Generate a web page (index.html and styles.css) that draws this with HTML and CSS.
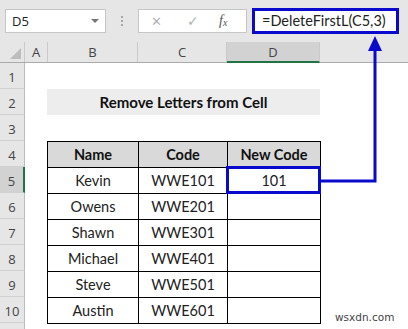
FILE: index.html
```html
<!DOCTYPE html>
<html>
<head>
<meta charset="utf-8">
<link rel="stylesheet" href="styles.css">
</head>
<body>
<div class="page">
  <div class="toolbar">
    <div class="namebox"><span class="nb-text">D5</span><span class="nb-arrow"></span></div>
    <div class="dots"><i></i><i></i><i></i></div>
    <div class="fbtns">
      <span class="btn-x">✕</span>
      <span class="btn-ok">✓</span>
      <span class="btn-fx">f<sub>x</sub></span>
    </div>
    <div class="formula">=DeleteFirstL(C5,3)</div>
  </div>
  <div class="colheads">
    <div class="ch corner"><span class="tri"></span></div>
    <div class="ch cA">A</div>
    <div class="ch cB">B</div>
    <div class="ch cC">C</div>
    <div class="ch cD sel">D</div>
    <div class="ch rest"></div>
  </div>
  <div class="body">
    <div class="rowheads">
      <div class="rh">1</div>
      <div class="rh">2</div>
      <div class="rh">3</div>
      <div class="rh">4</div>
      <div class="rh sel">5</div>
      <div class="rh">6</div>
      <div class="rh">7</div>
      <div class="rh">8</div>
      <div class="rh">9</div>
      <div class="rh">10</div>
      <div class="rh"></div>
    </div>
    <div class="content">
      <div class="spacer"></div>
      <div class="title">Remove Letters from Cell</div>
      <div class="spacer"></div>
      <div class="tbl">
        <div class="th">Name</div><div class="th">Code</div><div class="th">New Code</div>
        <div class="td">Kevin</div><div class="td">WWE101</div><div class="td">101</div>
        <div class="td">Owens</div><div class="td">WWE201</div><div class="td"></div>
        <div class="td">Shawn</div><div class="td">WWE301</div><div class="td"></div>
        <div class="td">Michael</div><div class="td">WWE401</div><div class="td"></div>
        <div class="td">Steve</div><div class="td">WWE501</div><div class="td"></div>
        <div class="td">Austin</div><div class="td">WWE601</div><div class="td"></div>
      </div>
    </div>
  </div>
  <div class="selbox"></div>
  <svg class="arrow" width="408" height="329" viewBox="0 0 408 329">
    <polyline points="321,181 375,181 375,48" fill="none" stroke="#0a0acd" stroke-width="3"/>
    <polygon points="375,36 368,51 382,51" fill="#0a0acd"/>
  </svg>
  <div class="watermark">wsxdn.com</div>
</div>
</body>
</html>
```
FILE: styles.css
```css
* { box-sizing: border-box; }
html, body { margin: 0; padding: 0; background: #fff; }
.page {
  position: relative;
  width: 408px;
  height: 329px;
  overflow: hidden;
  font-family: Lato, "Open Sans", sans-serif;
  color: #222;
}
.toolbar {
  height: 42px;
  background: #e6e6e6;
  display: flex;
  align-items: flex-start;
  padding: 9px 0 0 5px;
}
.namebox {
  width: 101px;
  height: 24px;
  background: #fff;
  border: 1px solid #c6c6c6;
  display: flex;
  align-items: center;
  justify-content: space-between;
  padding: 0 6px 0 6px;
  font-family: "Open Sans", sans-serif;
  font-size: 13px;
  color: #222;
}
.nb-arrow {
  width: 0; height: 0;
  border-left: 4px solid transparent;
  border-right: 4px solid transparent;
  border-top: 4px solid #777;
}
.dots {
  width: 32px;
  height: 24px;
  display: flex;
  flex-direction: column;
  align-items: center;
  justify-content: center;
  gap: 2px;
}
.dots i {
  display: block;
  width: 2px; height: 2px;
  background: #a6a6a6;
}
.fbtns {
  width: 109px;
  height: 24px;
  background: #fff;
  border: 1px solid #c6c6c6;
  display: flex;
  align-items: center;
  padding-left: 12px;
  color: #b3b3b3;
  font-size: 14px;
}
.btn-x { width: 36px; font-family: "DejaVu Sans", sans-serif; font-size: 13px; }
.btn-ok { width: 32px; font-family: "DejaVu Sans", sans-serif; font-size: 14px; }
.btn-fx {
  font-family: "Liberation Serif", serif;
  font-style: italic;
  color: #555;
  font-size: 14px;
}
.btn-fx sub { font-size: 10px; vertical-align: -1px; }
.formula {
  margin-left: 5px;
  margin-top: -1px;
  width: 147px;
  height: 26px;
  background: #fff;
  border: 3px solid #0a0acd;
  font-family: Lato, sans-serif;
  font-size: 14.5px;
  line-height: 20px;
  padding-left: 7px;
  color: #222;
}
.colheads {
  display: flex;
  height: 21px;
  background: #e6e6e6;
  border-bottom: 1px solid #ababab;
  font-family: "Open Sans", sans-serif;
  font-size: 13px;
  color: #444;
}
.ch {
  height: 20px;
  display: flex;
  align-items: center;
  justify-content: center;
  border-right: 1px solid #cacaca;
}
.corner { width: 25px; position: relative; }
.tri {
  position: absolute;
  right: 3px; bottom: 3px;
  width: 0; height: 0;
  border-left: 11px solid transparent;
  border-bottom: 11px solid #bdbdbd;
}
.cA { width: 23px; }
.cB { width: 90px; }
.cC { width: 89px; }
.cD { width: 93px; }
.ch.sel { background: #d2d2d2; border-bottom: 2px solid #217346; height: 21px; padding-top: 1px; }
.rest { flex: 1; border-right: none; }
.body { display: flex; }
.rowheads { width: 25px; display: flex; flex-direction: column; }
.rh {
  height: 26px;
  flex: none;
  background: #e6e6e6;
  border-bottom: 1px solid #d0d0d0;
  border-right: 1px solid #bcbcbc;
  display: flex;
  align-items: center;
  justify-content: center;
  font-family: "Open Sans", sans-serif;
  font-size: 13px;
  color: #444;
  padding-top: 2px;
}
.rh.sel { background: #d2d2d2; border-right: 2px solid #217346; }
.content { display: flex; flex-direction: column; padding-left: 22px; }
.spacer { height: 26px; }
.title {
  width: 273px;
  height: 26px;
  background: #ededed;
  display: flex;
  align-items: center;
  justify-content: center;
  font-weight: bold;
  font-size: 15px;
  color: #111;
}
.tbl {
  width: 274px;
  display: grid;
  grid-template-columns: 90px 88px 92px;
  grid-auto-rows: 25px;
  gap: 1px;
  padding: 1px;
  background: #000;
}
.th, .td {
  display: flex;
  align-items: center;
  justify-content: center;
  font-size: 14.5px;
  color: #222;
  background: #fff;
}
.th { background: #d9d9d9; font-weight: bold; color: #111; }
.selbox {
  position: absolute;
  left: 226px;
  top: 166px;
  width: 95px;
  height: 28px;
  border: 3px solid #0a0acd;
}
.arrow { position: absolute; left: 0; top: 0; }
.watermark {
  position: absolute;
  left: 335px;
  top: 311px;
  font-family: "DejaVu Sans", sans-serif;
  font-size: 10.5px;
  color: #444;
}
```
